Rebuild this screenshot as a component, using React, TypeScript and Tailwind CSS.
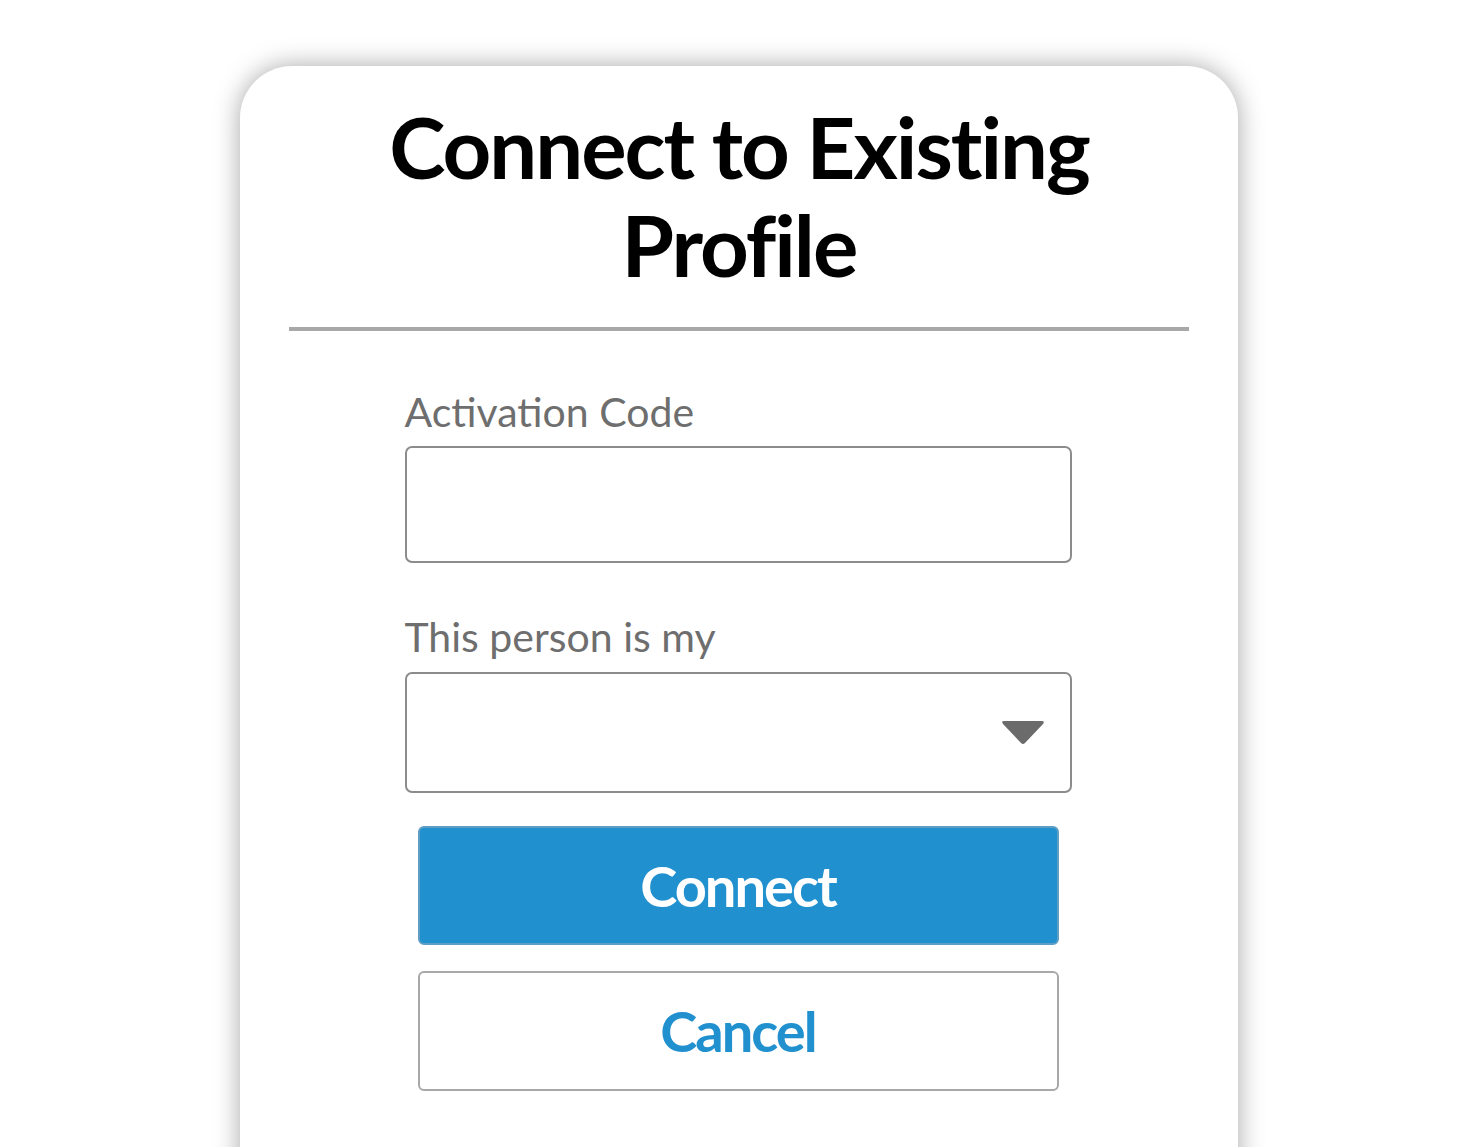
export default function App() {
  return (
    <div
      className="flex min-h-[1147px] justify-center overflow-hidden bg-white pt-[66px]"
      style={{ fontFamily: "Lato, 'Noto Sans', sans-serif" }}
    >
      <div className="mr-[2px] flex h-[1130px] w-[998px] flex-col items-center rounded-t-[52px] bg-white shadow-[0_0_26px_rgba(0,0,0,0.35)]">
        <h1 className="mt-[31px] w-full text-center text-[85px] font-bold leading-[98px] tracking-[-2px] text-black">
          Connect to Existing
          <br />
          Profile
        </h1>

        <div className="mt-[34px] h-[4px] w-[900px] bg-[#a8a8a8]" />

        <div className="mt-[56px] mr-[2px] flex w-[667px] flex-col">
          <label className="text-[41px] leading-[50px] text-[#6e6e6e]">Activation Code</label>
          <div className="mt-[9px] h-[117px] rounded-[7px] border-2 border-[#8c8c8c]" />

          <label className="mt-[49px] text-[41px] leading-[50px] text-[#6e6e6e]">This person is my</label>
          <div className="mt-[10px] flex h-[121px] items-center justify-end rounded-[7px] border-2 border-[#8c8c8c] pr-[24px]">
            <svg width="46" height="28" viewBox="0 0 46 28">
              <path
                d="M4 2 H42 Q45 2 43 5 L25 24 Q23 26 21 24 L3 5 Q1 2 4 2 Z"
                fill="#6b6b6b"
              />
            </svg>
          </div>

          <div className="mt-[33px] flex flex-col items-center gap-[26px]">
            <button className="flex h-[119px] w-[641px] items-center justify-center rounded-[6px] border-2 border-[#5f9ec4] bg-[#2190cf] text-[56px] font-bold tracking-[-2px] text-white">
              Connect
            </button>
            <button className="flex h-[120px] w-[641px] items-center justify-center rounded-[6px] border-2 border-[#a8a8a8] bg-white text-[56px] font-bold tracking-[-2px] text-[#2190cf]">
              Cancel
            </button>
          </div>
        </div>
      </div>
    </div>
  );
}
